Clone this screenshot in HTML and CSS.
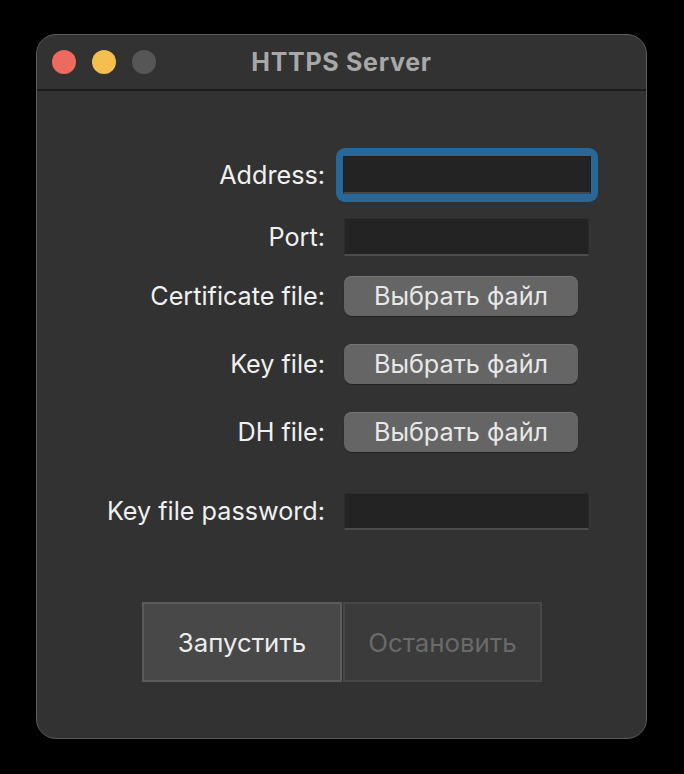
FILE: index.html
```html
<!DOCTYPE html>
<html lang="ru">
<head>
<meta charset="utf-8">
<title>HTTPS Server</title>
<link rel="stylesheet" href="styles.css">
</head>
<body>
<div class="window">
  <div class="titlebar">
    <div class="lights">
      <span class="light red"></span>
      <span class="light yellow"></span>
      <span class="light gray"></span>
    </div>
    <div class="title">HTTPS Server</div>
  </div>
  <div class="form">
    <div class="row r1">
      <label class="label">Address:</label>
      <div class="ctrl"><span class="ring"><span class="field"></span></span></div>
    </div>
    <div class="row r2">
      <label class="label">Port:</label>
      <div class="ctrl"><span class="field"></span></div>
    </div>
    <div class="row r3">
      <label class="label">Certificate file:</label>
      <div class="ctrl"><button class="pick">Выбрать файл</button></div>
    </div>
    <div class="row r4">
      <label class="label">Key file:</label>
      <div class="ctrl"><button class="pick">Выбрать файл</button></div>
    </div>
    <div class="row r5">
      <label class="label">DH file:</label>
      <div class="ctrl"><button class="pick">Выбрать файл</button></div>
    </div>
    <div class="row r6">
      <label class="label">Key file password:</label>
      <div class="ctrl"><span class="field short"></span></div>
    </div>
    <div class="actions">
      <button class="act start">Запустить</button>
      <button class="act stop">Остановить</button>
    </div>
  </div>
</div>
</body>
</html>
```
FILE: styles.css
```css
html, body {
  margin: 0;
  padding: 0;
  background: #000;
  width: 684px;
  height: 774px;
  overflow: hidden;
}

body {
  font-family: Inter, "Liberation Sans", sans-serif;
}

.window {
  box-sizing: border-box;
  margin: 34px 0 0 36px;
  width: 611px;
  height: 705px;
  background: #323232;
  border: 1px solid #5c5c5c;
  border-radius: 20px;
  overflow: hidden;
}

.titlebar {
  position: relative;
  height: 54px;
  border-bottom: 2px solid #1b1b1b;
  display: flex;
  align-items: center;
  justify-content: center;
}

.lights {
  position: absolute;
  left: 15px;
  top: 15px;
  display: flex;
  gap: 16px;
}

.light {
  width: 24px;
  height: 24px;
  border-radius: 50%;
  display: block;
}
.red { background: #ee6a5e; }
.yellow { background: #f5bf4f; }
.gray { background: #565656; }

.title {
  color: #a8a8a8;
  font-weight: 700;
  font-size: 25px;
  letter-spacing: 0.7px;
  margin-top: 0;
}

.form {
  padding-top: 65px;
  display: flex;
  flex-direction: column;
}

.row {
  display: grid;
  grid-template-columns: 288px 1fr;
  grid-template-rows: 100%;
  column-gap: 19px;
  align-items: center;
}
.r1 { height: 38px; }
.r2 { height: 38px; margin-top: 24px; }
.r3 { height: 40px; margin-top: 20px; }
.r4 { height: 40px; margin-top: 28px; }
.r5 { height: 40px; margin-top: 28px; }
.r6 { height: 36px; margin-top: 41px; }

.label {
  text-align: right;
  color: #f0f0f0;
  font-size: 25.2px;
  line-height: 30px;
}

.ctrl {
  display: flex;
  align-items: center;
  height: 100%;
}

.field {
  box-sizing: border-box;
  display: block;
  width: 245px;
  height: 38px;
  background: #232323;
  border: 1px solid #2c2c2c;
  border-bottom: 2px solid #4c4c4c;
}
.field.short { height: 37px; }

.ring {
  display: block;
  margin: -8px 0 -8px -8px;
  padding: 8px 7px 8px 7px;
  background: #27679a;
  border-radius: 9px;
}
.ring .field {
  width: 248px;
  border-color: #1e1e1e;
  border-bottom-color: #474747;
}

.pick {
  box-sizing: border-box;
  width: 234px;
  height: 40px;
  background: #656565;
  border: none;
  border-radius: 8px;
  box-shadow: inset 0 1px 0 #747474, 0 1px 1px rgba(0,0,0,0.35);
  color: #e8e8e8;
  font-family: Inter, "Liberation Sans", sans-serif;
  font-size: 25.2px;
  padding: 0;
  line-height: 38px;
}

.actions {
  margin-top: 73px;
  padding-left: 105px;
  display: flex;
  gap: 1px;
}

.act {
  box-sizing: border-box;
  height: 80px;
  font-family: Inter, "Liberation Sans", sans-serif;
  font-size: 25.8px;
  padding: 0;
}
.start {
  width: 200px;
  background: #484848;
  border: 2px solid #5b5b5b;
  color: #ececec;
}
.stop {
  width: 199px;
  background: #3b3b3b;
  border: 2px solid #474747;
  color: #6a6a6a;
}
```
